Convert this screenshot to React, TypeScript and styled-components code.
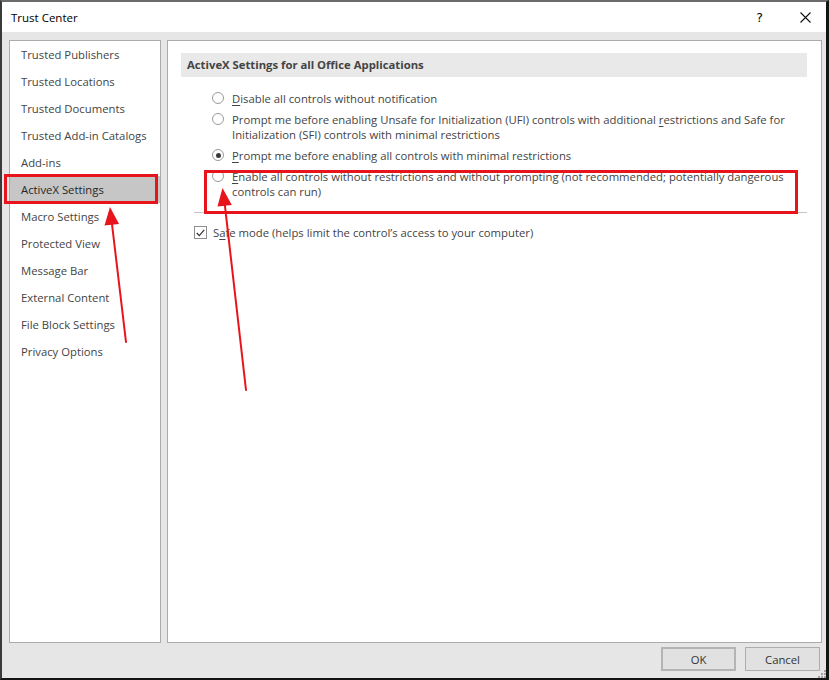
import styled, { createGlobalStyle } from "styled-components";

const GlobalStyle = createGlobalStyle`
  html, body {
    margin: 0;
    padding: 0;
    background: #1e1e1e;
  }
  body {
    font-family: "Open Sans", "Noto Sans", sans-serif;
  }
`;

const Window = styled.div`
  position: relative;
  width: 829px;
  height: 680px;
  box-sizing: border-box;
  border-top: 2px solid #6b6b6b;
  border-left: 2px solid #3a3a3a;
  border-right: 3px solid #141414;
  border-bottom: 2px solid #141414;
  background: #e6e6e6;
  display: flex;
  flex-direction: column;
  font-size: 11px;
  color: #444;
`;

const TitleBar = styled.div`
  height: 30px;
  flex: none;
  background: #fff;
  display: flex;
  align-items: center;
  padding-left: 9px;
  padding-right: 15px;
  font-size: 11.5px;
  color: #000;
`;

const Title = styled.div`
  flex: 1;
`;

const HelpGlyph = styled.span`
  font-size: 12.5px;
  font-family: "DejaVu Sans", sans-serif;
  font-weight: 400;
  margin-right: 37px;
  color: #000;
`;

const Body = styled.div`
  flex: 1;
  display: flex;
  flex-direction: column;
  padding: 8px 4px 0 7px;
`;

const Panels = styled.div`
  height: 603px;
  display: flex;
  gap: 6px;
`;

const Sidebar = styled.nav`
  width: 152px;
  box-sizing: border-box;
  background: #fff;
  border: 1px solid #ababab;
`;

const NavItem = styled.div<{ $selected?: boolean }>`
  height: 27px;
  display: flex;
  align-items: center;
  padding-left: 11px;
  background: ${(p) => (p.$selected ? "#c6c6c6" : "transparent")};
  color: ${(p) => (p.$selected ? "#262626" : "#444")};
  font-size: 11.3px;
`;

const Content = styled.section`
  flex: 1;
  box-sizing: border-box;
  background: #fff;
  border: 1px solid #ababab;
  padding: 12px 14px 0 13px;
`;

const SectionHead = styled.div`
  height: 24px;
  box-sizing: border-box;
  background: #e9e9e9;
  display: flex;
  align-items: center;
  padding: 0 0 2px 6px;
  font-weight: 700;
  font-size: 11.3px;
  color: #444;
`;

const Options = styled.div`
  display: flex;
  flex-direction: column;
  gap: 6px;
  padding: 14px 0 0 31px;
`;

const Option = styled.label`
  display: flex;
  gap: 8px;
  line-height: 15px;
  font-size: 11.3px;
`;

const Radio = styled.span<{ $checked?: boolean }>`
  flex: none;
  width: 12px;
  height: 12px;
  margin-top: 1px;
  box-sizing: border-box;
  border: 1px solid #9a9a9a;
  border-radius: 50%;
  background: #fff;
  display: flex;
  align-items: center;
  justify-content: center;
  &::after {
    content: "";
    width: 5px;
    height: 5px;
    border-radius: 50%;
    background: ${(p) => (p.$checked ? "#3a3a3a" : "transparent")};
  }
`;

const Key = styled.span`
  text-decoration: underline;
  text-underline-offset: 2px;
`;

const Separator = styled.div`
  height: 1px;
  background: #c4c4c4;
  margin: 13px 0 0 13px;
`;

const CheckRow = styled.label`
  display: flex;
  align-items: center;
  gap: 6px;
  line-height: 15px;
  font-size: 11.3px;
  padding: 12px 0 0 13px;
`;

const CheckBox = styled.span`
  width: 13px;
  height: 13px;
  box-sizing: border-box;
  border: 1px solid #8f8f8f;
  background: #fff;
  display: flex;
  align-items: center;
  justify-content: center;
`;

const Footer = styled.div`
  display: flex;
  justify-content: flex-end;
  gap: 9px;
  padding: 4px 2px 0 0;
`;

const Button = styled.button<{ $default?: boolean }>`
  width: 75px;
  height: 24px;
  box-sizing: border-box;
  background: #e1e1e1;
  border: ${(p) => (p.$default ? "2px solid #b4b4b4" : "1px solid #adadad")};
  font-family: inherit;
  font-size: 11.3px;
  color: #333;
  padding: 0;
`;

const Grip = styled.svg`
  position: absolute;
  right: 0;
  bottom: 0;
`;

const Highlight = styled.div<{ $x: number; $y: number; $w: number; $h: number }>`
  position: absolute;
  left: ${(p) => p.$x}px;
  top: ${(p) => p.$y}px;
  width: ${(p) => p.$w}px;
  height: ${(p) => p.$h}px;
  box-sizing: border-box;
  border: 3px solid #e8141b;
  pointer-events: none;
`;

const Arrows = styled.svg`
  position: absolute;
  left: -2px;
  top: -2px;
  pointer-events: none;
`;

const navItems = [
  "Trusted Publishers",
  "Trusted Locations",
  "Trusted Documents",
  "Trusted Add-in Catalogs",
  "Add-ins",
  "ActiveX Settings",
  "Macro Settings",
  "Protected View",
  "Message Bar",
  "External Content",
  "File Block Settings",
  "Privacy Options",
];

function App() {
  return (
    <>
      <GlobalStyle />
      <Window>
        <TitleBar>
          <Title>Trust Center</Title>
          <HelpGlyph>?</HelpGlyph>
          <svg width="11" height="11" viewBox="0 0 11 11">
            <path d="M0.5 0.5 L10.5 10.5 M10.5 0.5 L0.5 10.5" stroke="#111" strokeWidth="1.1" />
          </svg>
        </TitleBar>
        <Body>
          <Panels>
            <Sidebar>
              {navItems.map((item) => (
                <NavItem key={item} $selected={item === "ActiveX Settings"}>
                  {item}
                </NavItem>
              ))}
            </Sidebar>
            <Content>
              <SectionHead>ActiveX Settings for all Office Applications</SectionHead>
              <Options>
                <Option>
                  <Radio />
                  <span>
                    <Key>D</Key>isable all controls without notification
                  </span>
                </Option>
                <Option>
                  <Radio />
                  <span>
                    Prompt me before enabling Unsafe for Initialization (UFI) controls with additional{" "}
                    <Key>r</Key>estrictions and Safe for Initialization (SFI) controls with minimal restrictions
                  </span>
                </Option>
                <Option>
                  <Radio $checked />
                  <span>
                    <Key>P</Key>rompt me before enabling all controls with minimal restrictions
                  </span>
                </Option>
                <Option>
                  <Radio />
                  <span>
                    <Key>E</Key>nable all controls without restrictions and without prompting (not recommended;
                    potentially dangerous controls can run)
                  </span>
                </Option>
              </Options>
              <Separator />
              <CheckRow>
                <CheckBox>
                  <svg width="9" height="8" viewBox="0 0 9 8">
                    <path d="M0.8 4 L3.3 6.6 L8.2 0.8" fill="none" stroke="#333" strokeWidth="1.2" />
                  </svg>
                </CheckBox>
                <span>
                  S<Key>a</Key>fe mode (helps limit the control’s access to your computer)
                </span>
              </CheckRow>
            </Content>
          </Panels>
          <Footer>
            <Button $default>OK</Button>
            <Button>Cancel</Button>
          </Footer>
        </Body>
        <Grip width="8" height="8" viewBox="0 0 8 8">
          <g fill="#a0a0a0">
            <rect x="6" y="0" width="2" height="2" />
            <rect x="3" y="3" width="2" height="2" />
            <rect x="6" y="3" width="2" height="2" />
            <rect x="0" y="6" width="2" height="2" />
            <rect x="3" y="6" width="2" height="2" />
            <rect x="6" y="6" width="2" height="2" />
          </g>
        </Grip>
        <Highlight $x={2} $y={172} $w={154} $h={30} />
        <Highlight $x={202} $y={168} $w={594} $h={44} />
        <Arrows width="829" height="680" viewBox="0 0 829 680">
          <g stroke="#e8141b" strokeWidth="2" strokeLinecap="round">
            <line x1="126" y1="342" x2="111.5" y2="220" />
            <line x1="246" y1="390" x2="224.5" y2="202" />
          </g>
          <g fill="#e8141b">
            <polygon points="110,207 119,224 104.5,225.5" />
            <polygon points="222.5,188 231.8,205 217.5,206.5" />
          </g>
        </Arrows>
      </Window>
    </>
  );
}

export default App;
